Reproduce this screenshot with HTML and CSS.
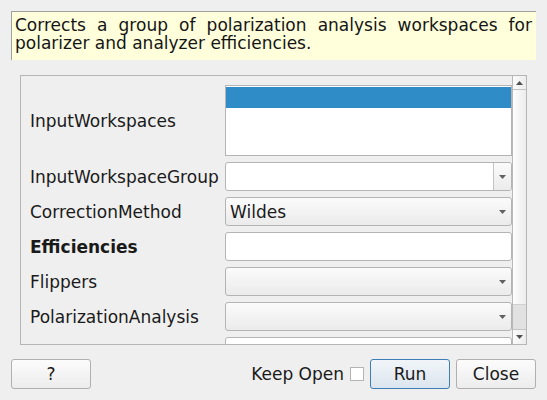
FILE: index.html
```html
<!DOCTYPE html>
<html>
<head>
<meta charset="utf-8">
<link rel="stylesheet" href="styles.css">
</head>
<body>
<div class="dialog">
  <div class="desc">Corrects a group of polarization analysis workspaces for polarizer and analyzer efficiencies.</div>
  <div class="scroll-area">
    <div class="viewport">
      <div class="props">
        <div class="label">InputWorkspaces</div>
        <div class="list"><div class="list-sel"></div></div>

        <div class="label">InputWorkspaceGroup</div>
        <div class="combo editable">
          <div class="edit"></div>
          <div class="drop"><svg class="arrow" width="7" height="4" viewBox="0 0 7 4"><polygon points="0,0 7,0 3.5,4" fill="#606060"/></svg></div>
        </div>

        <div class="label">CorrectionMethod</div>
        <div class="combo"><span class="combo-text">Wildes</span><svg class="arrow" width="7" height="4" viewBox="0 0 7 4"><polygon points="0,0 7,0 3.5,4" fill="#606060"/></svg></div>

        <div class="label bold">Efficiencies</div>
        <div class="lineedit"></div>

        <div class="label">Flippers</div>
        <div class="combo"><span class="combo-text"></span><svg class="arrow" width="7" height="4" viewBox="0 0 7 4"><polygon points="0,0 7,0 3.5,4" fill="#606060"/></svg></div>

        <div class="label">PolarizationAnalysis</div>
        <div class="combo"><span class="combo-text"></span><svg class="arrow" width="7" height="4" viewBox="0 0 7 4"><polygon points="0,0 7,0 3.5,4" fill="#606060"/></svg></div>

        <div class="label">SpinStatesOutWildes</div>
        <div class="lineedit"></div>
      </div>
    </div>
    <div class="scrollbar">
      <div class="sb-btn up"><svg width="7" height="4" viewBox="0 0 7 4"><polygon points="0,4 7,4 3.5,0" fill="#505050"/></svg></div>
      <div class="sb-track"><div class="sb-handle"></div></div>
      <div class="sb-btn down"><svg width="7" height="4" viewBox="0 0 7 4"><polygon points="0,0 7,0 3.5,4" fill="#505050"/></svg></div>
    </div>
  </div>
  <div class="buttons">
    <button class="btn">?</button>
    <div class="spacer"></div>
    <span class="keep">Keep Open</span>
    <span class="checkbox"></span>
    <button class="btn run">Run</button>
    <button class="btn">Close</button>
  </div>
</div>
</body>
</html>
```

FILE: styles.css
```css
html, body {
  margin: 0;
  padding: 0;
  background: #efefef;
}
body {
  font-family: "DejaVu Sans", sans-serif;
  font-size: 17px;
  color: #1a1a1a;
}
.dialog {
  padding: 11px;
  display: flex;
  flex-direction: column;
  width: 525px;
}
.desc {
  height: 44px;
  background: #ffffdc;
  border-top: 1px solid #a0a0a0;
  border-left: 1px solid #a0a0a0;
  padding: 4px 4px 0 3px;
  line-height: 18px;
  text-align: justify;
  color: #151515;
}
.scroll-area {
  margin: 15px 9px 0 9px;
  height: 268px;
  border: 1px solid #b6b6b6;
  display: flex;
}
.viewport {
  width: 491px;
  overflow: hidden;
}
.props {
  padding: 9px 0 0 9px;
  display: grid;
  grid-template-columns: 189px 287px;
  grid-template-rows: 71px;
  grid-auto-rows: 29px;
  column-gap: 6px;
  row-gap: 6px;
}
.label {
  align-self: center;
  white-space: nowrap;
  color: #1a1a1a;
}
.bold {
  font-weight: bold;
}
.list {
  box-sizing: border-box;
  border: 1px solid #b4b4b4;
  background: #ffffff;
  padding-top: 1px;
}
.list-sel {
  height: 21px;
  background: #308cc6;
}
.combo {
  box-sizing: border-box;
  border: 1px solid #b4b4b4;
  border-radius: 3px;
  background: linear-gradient(#fbfbfb, #ebebeb);
  display: flex;
  align-items: center;
  padding: 0 5px 0 4px;
}
.combo-text {
  flex: 1;
  color: #1a1a1a;
}
.combo.editable {
  background: #ffffff;
  padding: 0;
}
.edit {
  flex: 1;
  align-self: stretch;
}
.drop {
  width: 17px;
  align-self: stretch;
  border-left: 1px solid #c4c4c4;
  background: linear-gradient(#fbfbfb, #ebebeb);
  border-radius: 0 3px 3px 0;
  display: flex;
  align-items: center;
  justify-content: center;
}
.lineedit {
  box-sizing: border-box;
  border: 1px solid #b4b4b4;
  border-radius: 3px;
  background: #ffffff;
}
.scrollbar {
  width: 14px;
  border-left: 1px solid #b8b8b8;
  display: flex;
  flex-direction: column;
  box-sizing: border-box;
}
.sb-btn {
  height: 13px;
  display: flex;
  align-items: center;
  justify-content: center;
  background: linear-gradient(to right, #fbfbfb, #ececec);
}
.sb-btn.up {
  border-bottom: 1px solid #c4c4c4;
}
.sb-btn.down {
  border-top: 1px solid #c4c4c4;
  height: 14px;
}
.sb-track {
  flex: 1;
  display: flex;
  flex-direction: column;
  justify-content: flex-end;
  background: linear-gradient(to right, #fdfdfd, #ececec);
}
.sb-handle {
  height: 24px;
  background: #e1e1e1;
  border-top: 1px solid #d0d0d0;
}
.buttons {
  margin-top: 14px;
  display: flex;
  align-items: center;
  height: 30px;
}
.spacer {
  flex: 1;
}
.btn {
  box-sizing: border-box;
  width: 80px;
  height: 30px;
  border: 1px solid #b0b0b0;
  border-radius: 3px;
  background: linear-gradient(#fcfcfc, #ececec);
  font-family: "DejaVu Sans", sans-serif;
  font-size: 17px;
  color: #1a1a1a;
  padding: 0;
  margin: 0;
}
.btn + .btn {
  margin-left: 6px;
}
.btn.run {
  border-color: #3c7fb8;
  background: linear-gradient(#f1f5f9, #dce5ee);
}
.keep {
  margin-right: 6px;
  color: #1a1a1a;
}
.checkbox {
  box-sizing: border-box;
  width: 14px;
  height: 14px;
  border: 1px solid #b4b4b4;
  background: #ffffff;
  margin-right: 6px;
}
```
